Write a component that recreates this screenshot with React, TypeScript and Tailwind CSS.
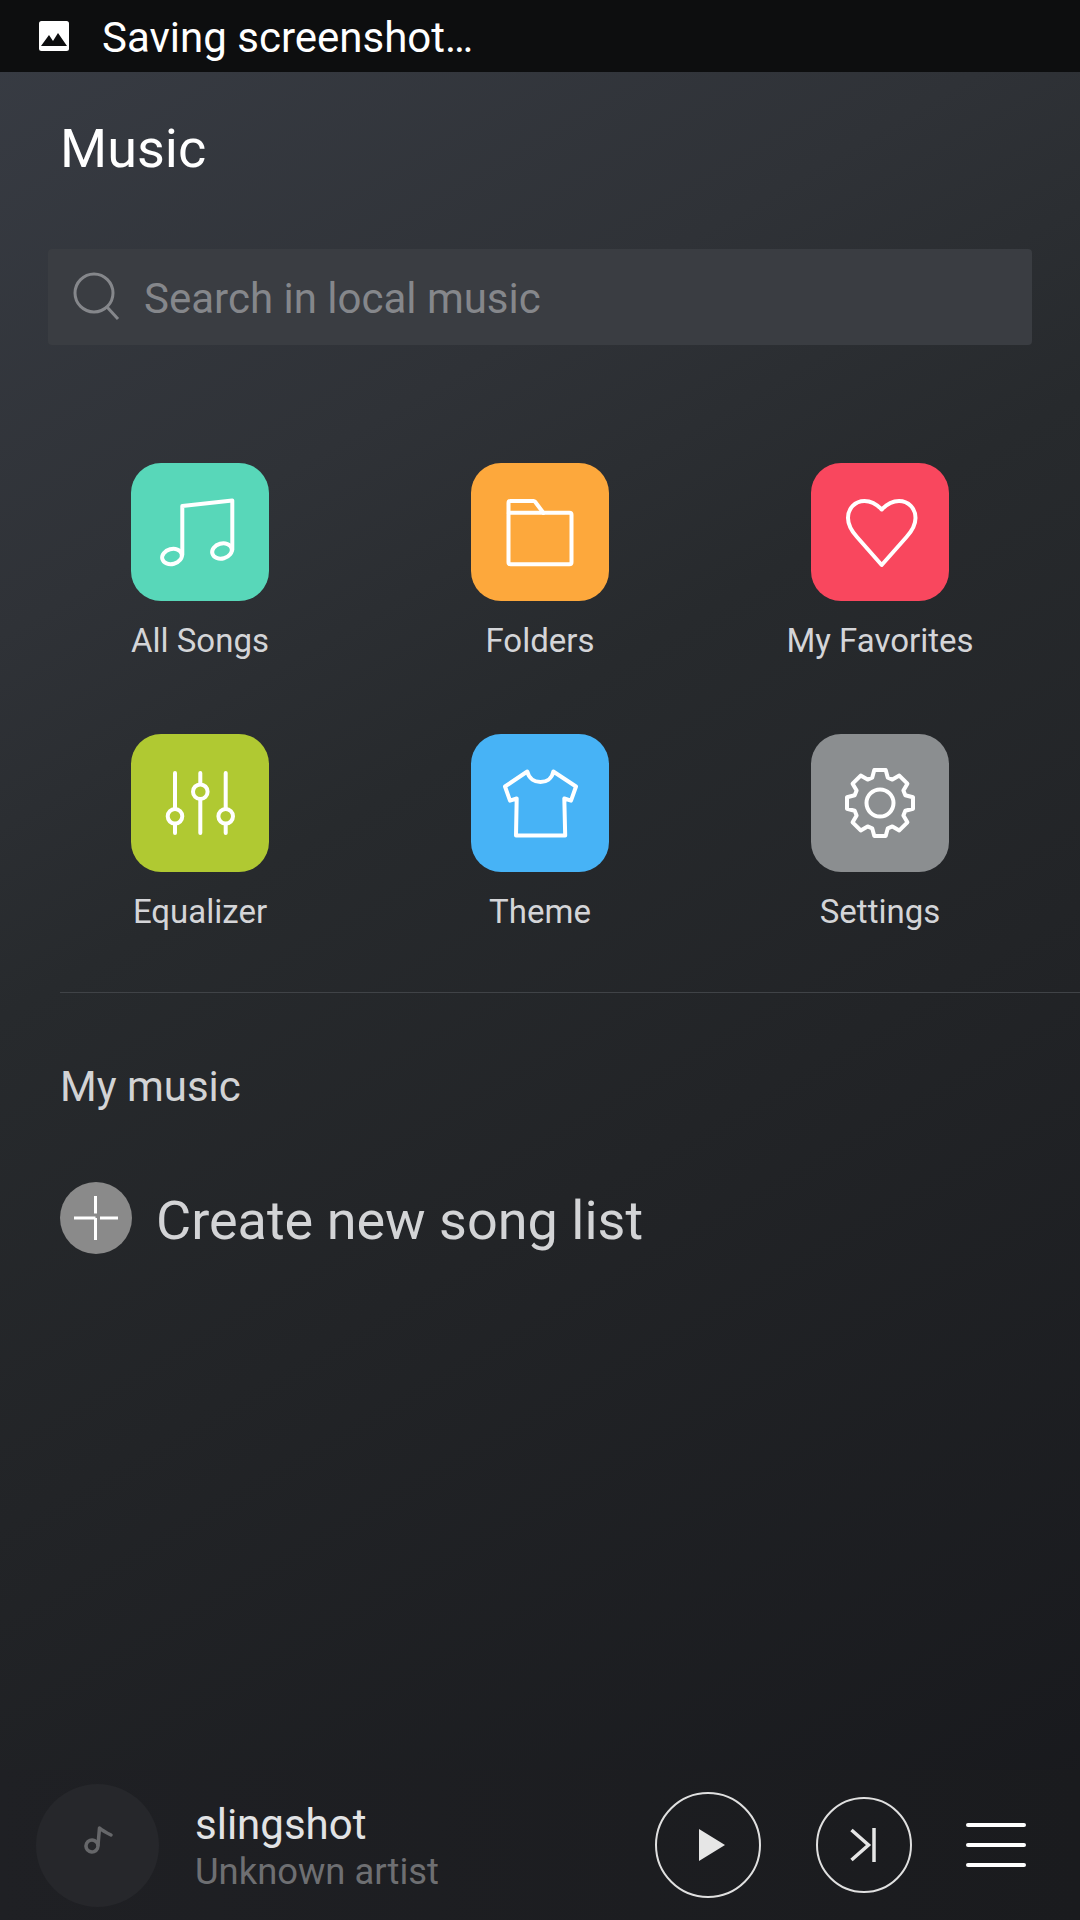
const gearPath = (() => {
  const cx = 69;
  const cy = 69;
  const pts: string[] = [];
  for (let i = 0; i < 8; i++) {
    const a = (i * Math.PI) / 4 - Math.PI / 2;
    const p = (r: number, d: number) => {
      const x = cx + r * Math.cos(a + d);
      const y = cy + r * Math.sin(a + d);
      return `${x.toFixed(1)} ${y.toFixed(1)}`;
    };
    pts.push(p(26.5, -0.3), p(33.5, -0.17), p(33.5, 0.17), p(26.5, 0.3));
  }
  return `M${pts.join("L")}Z`;
})();

const tiles = [
  {
    label: "All Songs",
    bg: "bg-[#58d7b9]",
    icon: (
      <>
        <path d="M51.3 92V43L101.3 37.5V87" />
        <ellipse cx="41" cy="93.5" rx="10" ry="7.5" transform="rotate(-15 41 93.5)" />
        <ellipse cx="91" cy="88" rx="10" ry="7.5" transform="rotate(-15 91 88)" />
      </>
    ),
  },
  {
    label: "Folders",
    bg: "bg-[#fda83c]",
    icon: (
      <>
        <rect x="37.5" y="49.7" width="63" height="51.5" rx="2" />
        <path d="M37.5 50V40a2 2 0 0 1 2-2H62.5a2 2 0 0 1 1.6 0.8L72.5 50" />
      </>
    ),
  },
  {
    label: "My Favorites",
    bg: "bg-[#f9475e]",
    icon: (
      <path d="M70.7 46.5C65 40.5 59 38 53.5 38C44 38 37 45.5 37 55C37 63 41 68.5 46 74L70.7 102L95.5 74C100.5 68.5 104.5 63 104.5 55C104.5 45.5 97.5 38 88 38C82.5 38 76.5 40.5 70.7 46.5Z" />
    ),
  },
  {
    label: "Equalizer",
    bg: "bg-[#b0c932]",
    icon: (
      <>
        <path d="M44 39V99M69.3 39V99M94.7 39V99" />
        <circle cx="44" cy="82.3" r="7.3" fill="#b0c932" />
        <circle cx="69.3" cy="57.7" r="7.3" fill="#b0c932" />
        <circle cx="94.7" cy="82.3" r="7.3" fill="#b0c932" />
      </>
    ),
  },
  {
    label: "Theme",
    bg: "bg-[#47b3f6]",
    icon: (
      <path d="M56.3 37.5C58 45 64 48 69.5 48C75 48 81 45 82.3 37.5L105 52.5L100 66.7L93.3 64.5L94.2 101.5H45L45.7 64.5L39 66.7L34 52.5Z" />
    ),
  },
  {
    label: "Settings",
    bg: "bg-[#8b8e90]",
    icon: (
      <>
        <path d={gearPath} />
        <circle cx="69" cy="69" r="13.5" />
      </>
    ),
  },
];

export default function App() {
  return (
    <div className="flex h-[1920px] w-[1080px] flex-col overflow-hidden bg-[linear-gradient(150deg,#383c44_0%,#2f3237_25%,#272a2d_40%,#222427_60%,#17181c_100%)] font-['Roboto',sans-serif]">
      <div className="flex h-[72px] shrink-0 items-center bg-[#0d0e0f] pl-[38px]">
        <svg width="32" height="32" viewBox="0 0 32 32">
          <rect x="1" y="1" width="30" height="30" rx="2.5" fill="#fff" />
          <path d="M3 26L11 15L15 21L20 13L29 26Z" fill="#0d0e0f" />
        </svg>
        <span className="mt-[3px] ml-[32px] text-[42px] leading-none text-white">Saving screenshot…</span>
      </div>

      <div className="flex-1 pt-[47px]">
        <h1 className="pl-[60px] text-[54px] leading-[60px] font-normal text-white">Music</h1>

        <div className="mx-[48px] mt-[70px] flex h-[96px] items-center rounded-[4px] bg-[#3a3d42] pl-[24px]">
          <svg width="50" height="50" viewBox="0 0 50 50" fill="none" stroke="#85878b" strokeWidth="3">
            <circle cx="22" cy="21" r="19" />
            <path d="M35 35L46 47" />
          </svg>
          <span className="mt-[4px] ml-[22px] text-[42px] leading-none text-[#85878b]">Search in local music</span>
        </div>

        <div className="mx-[30px] mt-[118px] grid grid-cols-3 gap-y-[73px]">
          {tiles.map((t) => (
            <div key={t.label} className="flex flex-col items-center">
              <div className={`h-[138px] w-[138px] rounded-[30px] ${t.bg}`}>
                <svg
                  width="138"
                  height="138"
                  viewBox="0 0 138 138"
                  fill="none"
                  stroke="#fff"
                  strokeWidth="4"
                  strokeLinecap="round"
                  strokeLinejoin="round"
                >
                  {t.icon}
                </svg>
              </div>
              <span className="mt-[20px] text-[33px] leading-[40px] text-[#d4d5d8]">{t.label}</span>
            </div>
          ))}
        </div>

        <div className="mt-[60px] ml-[60px] h-px bg-[#404347]" />

        <h2 className="mt-[64px] pl-[60px] text-[42px] leading-[60px] font-normal text-[#d2d3d5]">My music</h2>

        <div className="mt-[65px] flex items-center pl-[60px]">
          <div className="flex h-[72px] w-[72px] items-center justify-center rounded-full bg-[#8a8a8a]">
            <svg width="44" height="44" viewBox="0 0 44 44" stroke="#fff" strokeWidth="3">
              <path d="M21.5 0V17.5M21.5 22V44M0 22H21.5M26 22H44" />
            </svg>
          </div>
          <span className="mt-[5px] ml-[24px] text-[54px] leading-none text-[#d3d4d6]">Create new song list</span>
        </div>
      </div>

      <div className="flex h-[150px] shrink-0 items-center bg-[linear-gradient(90deg,#1f2024,#1a1b1e)] pl-[36px]">
        <div className="flex h-[123px] w-[123px] items-center justify-center rounded-full bg-[#26272b]">
          <svg width="40" height="40" viewBox="0 0 40 40" fill="none" stroke="#66676a" strokeWidth="3.5" strokeLinecap="round" strokeLinejoin="round">
            <circle cx="14" cy="21" r="6" transform="rotate(-20 14 21)" />
            <path d="M20 20L21.5 3C25 6 29 8 33 10" />
          </svg>
        </div>
        <div className="ml-[36px] flex flex-1 flex-col pt-[6px]">
          <span className="text-[42px] leading-[47px] text-[#e2e3e5]">slingshot</span>
          <span className="text-[36.4px] leading-[48px] text-[#6e6f72]">Unknown artist</span>
        </div>
        <div className="flex h-[106px] w-[106px] items-center justify-center rounded-full border-2 border-[#e0e0e0]">
          <svg width="106" height="106" viewBox="0 0 106 106" className="shrink-0">
            <path d="M44 37L70 53L44 69Z" fill="#e6e6e6" />
          </svg>
        </div>
        <div className="ml-[55px] flex h-[96px] w-[96px] items-center justify-center rounded-full border-2 border-[#e0e0e0]">
          <svg width="96" height="96" viewBox="0 0 96 96" fill="none" stroke="#e6e6e6" strokeWidth="3.5" className="shrink-0">
            <path d="M35.5 33L52.5 48L35.5 63" />
            <path d="M58 31V65" />
          </svg>
        </div>
        <div className="mr-[54px] ml-[54px] flex w-[60px] flex-col gap-[16px]">
          <div className="h-[4px] rounded-full bg-white" />
          <div className="h-[4px] rounded-full bg-white" />
          <div className="h-[4px] rounded-full bg-white" />
        </div>
      </div>
    </div>
  );
}
